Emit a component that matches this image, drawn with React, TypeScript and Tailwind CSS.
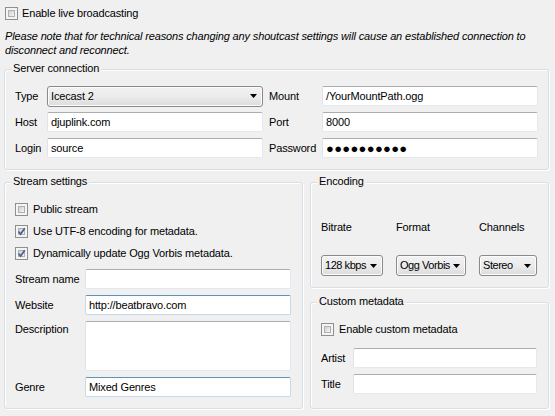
import React from 'react'

// petite case à cocher façon Windows 7
function Check({ checked = false }: { checked?: boolean }) {
  return (
    <span className="w-[13px] h-[13px] shrink-0 border border-[#8e8f8f] bg-[#f4f4f4] p-[2px] flex">
      <span className="flex-1 border border-[#b0b0b0] bg-gradient-to-br from-[#cfcfcf] to-[#f5f5f5] flex items-center justify-center">
        {checked && (
          <svg width="9" height="9" viewBox="0 0 9 9" className="-m-[2px]">
            <path d="M1.5 4.5 L3.6 7 L7.8 1.2" fill="none" stroke="#4a5f97" strokeWidth="1.7" />
          </svg>
        )}
      </span>
    </span>
  )
}

function Combo({ value, w, tight = false }: { value: string; w: string; tight?: boolean }) {
  return (
    <div
      className={`${w} h-[21px] border border-[#8a8a8a] rounded-[3px] bg-gradient-to-b from-[#f2f2f2] via-[#ebebeb] to-[#dcdcdc] flex items-center pl-[3px] pr-[5px] shadow-[inset_0_0_0_1px_#fcfcfc]`}
    >
      <span className={`flex-1 whitespace-nowrap ${tight ? 'tracking-[-0.45px]' : ''}`}>{value}</span>
      <svg width="7" height="4" viewBox="0 0 7 4" className="shrink-0">
        <path d="M0 0 H7 L3.5 4 Z" fill="#000" />
      </svg>
    </div>
  )
}

function Field({ value = '', w, h = 'h-[20px]', blue = false, dots = false }: { value?: string; w: string; h?: string; blue?: boolean; dots?: boolean }) {
  return (
    <div
      className={`${w} ${h} bg-white border rounded-[2px] px-[3px] flex ${h === 'h-[20px]' ? 'items-center' : 'items-start'} ${
        blue
          ? 'border-[#c5d9ec] border-t-[#5c93bd]'
          : 'border-[#e3e9ef] border-t-[#abadb3] border-l-[#e2e3ea]'
      }`}
    >
      {dots ? <span className="text-[13px] tracking-[0.3px] leading-none">●●●●●●●●●●</span> : value}
    </div>
  )
}

function Group({ title, className, children }: { title: string; className: string; children: React.ReactNode }) {
  return (
    <div className={`relative border border-[#d5dfe5] rounded-[3px] shadow-[inset_1px_1px_0_#fff,1px_1px_0_#fff] ${className}`}>
      <span className="absolute -top-[9px] left-[6px] px-[2px] bg-[#f0f0f0] leading-[14px]">{title}</span>
      {children}
    </div>
  )
}

export default function App() {
  return (
    <div className="w-[555px] h-[416px] bg-[#f0f0f0] text-[11px] leading-[13px] tracking-[-0.15px] text-black font-['Liberation_Sans',Arial,sans-serif] overflow-hidden">
      <div className="flex items-center gap-[4px] pl-[5px] pt-[7px]">
        <Check />
        <span>Enable live broadcasting</span>
      </div>
      <p className="italic pl-[5px] pt-[9px] w-[550px] leading-[14px]">
        Please note that for technical reasons changing any shoutcast settings will cause an established connection to
        disconnect and reconnect.
      </p>

      <Group title="Server connection" className="ml-[4px] mt-[12px] w-[545px] h-[101px]">
        <div className="grid grid-cols-[32px_216px_6px_53px_216px] grid-rows-[20px_20px_20px] gap-y-[6px] items-center pl-[10px] pt-[16px]">
          <span>Type</span>
          <Combo value="Icecast 2" w="w-[216px]" />
          <span />
          <span>Mount</span>
          <Field value="/YourMountPath.ogg" w="w-[216px]" />

          <span>Host</span>
          <Field value="djuplink.com" w="w-[216px]" />
          <span />
          <span>Port</span>
          <Field value="8000" w="w-[216px]" />

          <span>Login</span>
          <Field value="source" w="w-[216px]" />
          <span />
          <span>Password</span>
          <Field w="w-[216px]" dots />
        </div>
      </Group>

      <div className="flex gap-[7px] ml-[4px] mt-[12px]">
        <Group title="Stream settings" className="w-[299px] h-[227px] pl-[10px] pt-[20px]">
          <div className="flex flex-col gap-[9px]">
            <div className="flex items-center gap-[5px]">
              <Check />
              <span>Public stream</span>
            </div>
            <div className="flex items-center gap-[5px]">
              <Check checked />
              <span>Use UTF-8 encoding for metadata.</span>
            </div>
            <div className="flex items-center gap-[5px]">
              <Check checked />
              <span>Dynamically update Ogg Vorbis metadata.</span>
            </div>
          </div>
          <div className="grid grid-cols-[70px_206px] gap-y-[6px] mt-[9px]">
            <span className="self-center">Stream name</span>
            <Field w="w-[206px]" />
            <span className="self-center">Website</span>
            <Field value="http://beatbravo.com" w="w-[206px]" blue />
            <span className="pt-[2px]">Description</span>
            <Field w="w-[206px]" h="h-[50px]" />
            <span className="self-center">Genre</span>
            <Field value="Mixed Genres" w="w-[206px]" blue />
          </div>
        </Group>

        <div className="flex flex-col gap-[14px]">
          <Group title="Encoding" className="w-[239px] h-[106px] pl-[10px] pt-[38px]">
            <div className="grid grid-cols-[75px_83px_60px] gap-y-[21px]">
              <span>Bitrate</span>
              <span>Format</span>
              <span>Channels</span>
              <Combo value="128 kbps" w="w-[62px]" tight />
              <Combo value="Ogg Vorbis" w="w-[70px]" tight />
              <Combo value="Stereo" w="w-[58px]" tight />
            </div>
          </Group>

          <Group title="Custom metadata" className="w-[239px] h-[107px] pl-[10px] pt-[20px]">
            <div className="flex items-center gap-[5px]">
              <Check />
              <span>Enable custom metadata</span>
            </div>
            <div className="grid grid-cols-[32px_184px] gap-y-[6px] mt-[12px]">
              <span className="self-center">Artist</span>
              <Field w="w-[184px]" />
              <span className="self-center">Title</span>
              <Field w="w-[184px]" />
            </div>
          </Group>
        </div>
      </div>
    </div>
  )
}
